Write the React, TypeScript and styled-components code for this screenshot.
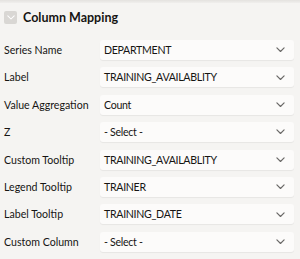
import styled, { createGlobalStyle } from 'styled-components';

const GlobalStyle = createGlobalStyle`
    html, body {
        margin: 0;
        padding: 0;
        background: #f5f4f2;
    }
    body {
        font-family: Lato, 'Noto Sans', sans-serif;
        color: #161513;
    }
`;

const rows = [
    { label: 'Series Name', value: 'DEPARTMENT' },
    { label: 'Label', value: 'TRAINING_AVAILABLITY' },
    { label: 'Value Aggregation', value: 'Count' },
    { label: 'Z', value: '- Select -' },
    { label: 'Custom Tooltip', value: 'TRAINING_AVAILABLITY' },
    { label: 'Legend Tooltip', value: 'TRAINER' },
    { label: 'Label Tooltip', value: 'TRAINING_DATE' },
    { label: 'Custom Column', value: '- Select -' },
];

const Chevron = ({ color, size = 9 }: { color: string; size?: number }) => (
    <svg width={size} height={size * 0.6} viewBox="0 0 10 6" fill="none">
        <path d="M1 1l4 4 4-4" stroke={color} strokeWidth="1.3" strokeLinecap="round" strokeLinejoin="round" />
    </svg>
);

const App = () => {
    return (
        <>
            <GlobalStyle />
            <Panel>
                <TopStrip />
                <Header>
                    <CollapseToggle>
                        <Chevron color="#ffffff" size={8} />
                    </CollapseToggle>
                    <Title>Column Mapping</Title>
                </Header>
                <Fields>
                    {rows.map((row) => (
                        <Field key={row.label}>
                            <Label>{row.label}</Label>
                            <Select>
                                <Value>{row.value}</Value>
                                <Chevron color="#6a6967" />
                            </Select>
                        </Field>
                    ))}
                </Fields>
            </Panel>
        </>
    );
};

const Panel = styled.div`
    width: 300px;
    height: 259px;
    display: flex;
    flex-direction: column;
    background: #f5f4f2;
    overflow: hidden;
`;

const TopStrip = styled.div`
    height: 3px;
    background: linear-gradient(#e4e2df, #f0efed);
`;

const Header = styled.div`
    display: flex;
    align-items: center;
    gap: 6px;
    padding: 8px 4px 0;
    height: 13px;
`;

const CollapseToggle = styled.div`
    width: 13px;
    height: 13px;
    border-radius: 2px;
    background: #d9d7d4;
    display: flex;
    align-items: center;
    justify-content: center;
`;

const Title = styled.div`
    font-size: 12.5px;
    font-weight: 700;
    color: #161513;
`;

const Fields = styled.div`
    display: flex;
    flex-direction: column;
    gap: 7.4px;
    padding: 16px 6px 0 4px;
`;

const Field = styled.div`
    display: flex;
    align-items: center;
`;

const Label = styled.div`
    width: 96px;
    font-size: 10.6px;
    color: #161513;
    white-space: nowrap;
`;

const Select = styled.div`
    flex: 1;
    height: 20px;
    display: flex;
    align-items: center;
    justify-content: space-between;
    padding: 0 9px 0 4px;
    background: #fcfbfa;
    border-radius: 3px;
    box-shadow: 0 1px 1px rgba(0, 0, 0, 0.06);
`;

const Value = styled.span`
    font-size: 10.6px;
    letter-spacing: -0.3px;
    color: #161513;
`;

export default App;
